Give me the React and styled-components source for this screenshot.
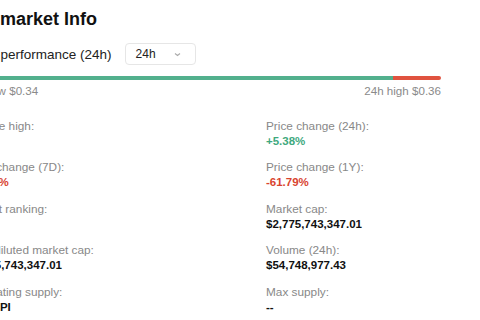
import React from "react";
import styled, { createGlobalStyle } from "styled-components";

const Global = createGlobalStyle`
  html, body { margin: 0; padding: 0; background: #ffffff; overflow: hidden; }
  body { font-family: "Liberation Sans", Arial, sans-serif; color: #111; }
`;

const Panel = styled.section`
  margin-left: -34px;
  width: 475px;
  padding-top: 8px;
`;

const Title = styled.h2`
  margin: 0 0 0 12px;
  font-size: 18px;
  line-height: 22px;
  font-weight: 700;
  color: #111;
`;

const PerfRow = styled.div`
  display: flex;
  align-items: center;
  margin-top: 13px;
  height: 22px;
`;

const PerfLabel = styled.span`
  font-size: 13.5px;
  color: #222;
`;

const Select = styled.div`
  box-sizing: border-box;
  margin-left: 13px;
  width: 71px;
  height: 22px;
  border: 1px solid #e6e6e6;
  border-radius: 4px;
  display: flex;
  align-items: center;
  justify-content: space-between;
  padding: 0 14px 0 10px;
  font-size: 12px;
  color: #222;
`;

const Track = styled.div`
  margin-top: 11px;
  height: 4px;
  border-radius: 2px;
  background: #e0533f;
  overflow: hidden;
  display: flex;
`;

const Fill = styled.div`
  height: 100%;
  background: #52b08d;
`;

const RangeRow = styled.div`
  display: flex;
  justify-content: space-between;
  margin-top: 5px;
  font-size: 11.6px;
  line-height: 12px;
  color: #8a8a8a;
`;

const Grid = styled.div`
  display: grid;
  grid-template-columns: 300px 1fr;
  row-gap: 11.5px;
  margin-top: 21.5px;
`;

const Item = styled.div`
  display: flex;
  flex-direction: column;
`;

const Label = styled.span`
  font-size: 11.8px;
  line-height: 15px;
  color: #888;
`;

const Value = styled.span`
  font-size: 11.5px;
  line-height: 15px;
  font-weight: 700;
  color: ${(p) => (p.$tone === "up" ? "#3fa97e" : p.$tone === "down" ? "#d9442f" : "#111")};
`;

const items = [
  ["All-time high:", "$2.98"],
  ["Price change (24h):", "+5.38%", "up"],
  ["Price change (7D):", "-13.34%", "down"],
  ["Price change (1Y):", "-61.79%", "down"],
  ["Market ranking:", "#57"],
  ["Market cap:", "$2,775,743,347.01"],
  ["Fully diluted market cap:", "$2,775,743,347.01"],
  ["Volume (24h):", "$54,748,977.43"],
  ["Circulating supply:", "7.68B PI"],
  ["Max supply:", "--"],
];

export default function App() {
  return (
    <>
      <Global />
      <Panel>
        <Title>Pi market Info</Title>
        <PerfRow>
          <PerfLabel>Price performance (24h)</PerfLabel>
          <Select>
            <span>24h</span>
            <svg width="7" height="5" viewBox="0 0 7 5">
              <polyline points="1,1.5 3.5,3.5 6,1.5" fill="none" stroke="#aaa" strokeWidth="1.1" />
            </svg>
          </Select>
        </PerfRow>
        <Track>
          <Fill style={{ width: "89.9%" }} />
        </Track>
        <RangeRow>
          <span>24h low $0.34</span>
          <span>24h high $0.36</span>
        </RangeRow>
        <Grid>
          {items.map(([l, v, t]) => (
            <Item key={l}>
              <Label>{l}</Label>
              <Value $tone={t}>{v}</Value>
            </Item>
          ))}
        </Grid>
      </Panel>
    </>
  );
}
